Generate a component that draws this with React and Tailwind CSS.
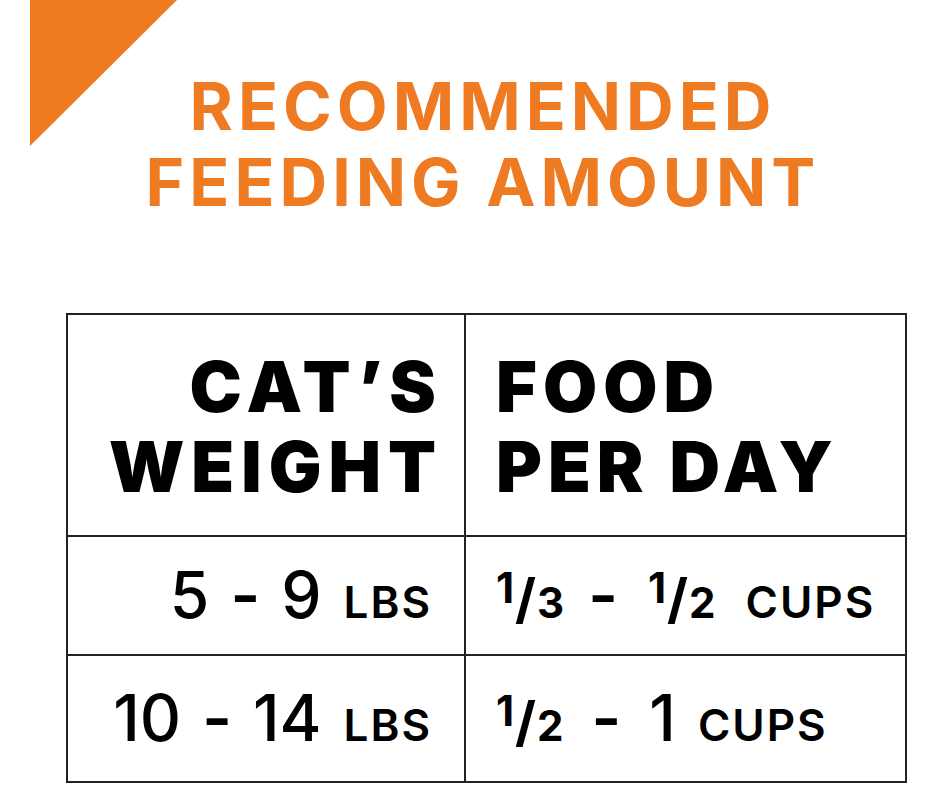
const font = { fontFamily: "Inter, 'Liberation Sans', sans-serif" };

function Frac({ n, d }) {
  return (
    <span className="inline-flex items-baseline font-bold">
      <span className="text-[42px] relative -top-[15px]">{n}</span>
      <span className="text-[54px] ml-[1px]">/</span>
      <span className="text-[42px] ml-[1px]">{d}</span>
    </span>
  );
}

const dash = "text-[64px] font-semibold";
const unit = "text-[44px] font-semibold tracking-[2px]";

export default function App() {
  return (
    <div className="relative w-[940px] h-[788px] bg-white overflow-hidden text-black" style={font}>
      <div className="absolute left-[30px] top-0 w-[147px] h-[146px] bg-[#ee7a22] [clip-path:polygon(0_0,100%_0,0_100%)]" />

      <div className="pt-[68px] pl-[26px] flex flex-col items-center text-[#ee7a22] font-bold text-[66px] leading-[76px] tracking-[5px]">
        <div>RECOMMENDED</div>
        <div>FEEDING AMOUNT</div>
      </div>

      <div className="mt-[93px] ml-[66px] w-[841px] border-2 border-[#222] grid grid-cols-[398px_1fr]">
        <div className="h-[222px] border-r-2 border-b-2 border-[#222] flex flex-col justify-center items-end pr-[28px] pt-[4px] font-black text-[70px] leading-[80px] tracking-[7px]">
          <div className="-mr-[7px]">CAT’S</div>
          <div className="-mr-[7px]">WEIGHT</div>
        </div>
        <div className="h-[222px] border-b-2 border-[#222] flex flex-col justify-center pl-[30px] pt-[4px] font-black text-[70px] leading-[80px] tracking-[6px]">
          <div>FOOD</div>
          <div>PER DAY</div>
        </div>

        <div className="h-[119px] border-r-2 border-b-2 border-[#222] flex items-baseline justify-end pr-[32px] pt-[10px]">
          <span className="text-[64px] font-medium">5</span>
          <span className={`${dash} ml-[21px]`}>-</span>
          <span className="text-[64px] font-medium ml-[21px]">9</span>
          <span className={`${unit} ml-[22px]`}>LBS</span>
        </div>
        <div className="h-[119px] border-b-2 border-[#222] flex items-baseline pl-[30px] pt-[10px]">
          <Frac n="1" d="3" />
          <span className={`${dash} ml-[24px]`}>-</span>
          <span className="ml-[30px]"><Frac n="1" d="2" /></span>
          <span className={`${unit} ml-[30px]`}>CUPS</span>
        </div>

        <div className="h-[125px] border-r-2 border-[#222] flex items-baseline justify-end pr-[32px] pt-[14px]">
          <span className="text-[64px] font-medium">10</span>
          <span className={`${dash} ml-[21px]`}>-</span>
          <span className="text-[64px] font-medium ml-[21px]">14</span>
          <span className={`${unit} ml-[22px]`}>LBS</span>
        </div>
        <div className="h-[125px] flex items-baseline pl-[30px] pt-[14px]">
          <Frac n="1" d="2" />
          <span className={`${dash} ml-[28px]`}>-</span>
          <span className="text-[64px] font-medium ml-[28px]">1</span>
          <span className={`${unit} ml-[22px]`}>CUPS</span>
        </div>
      </div>
    </div>
  );
}
